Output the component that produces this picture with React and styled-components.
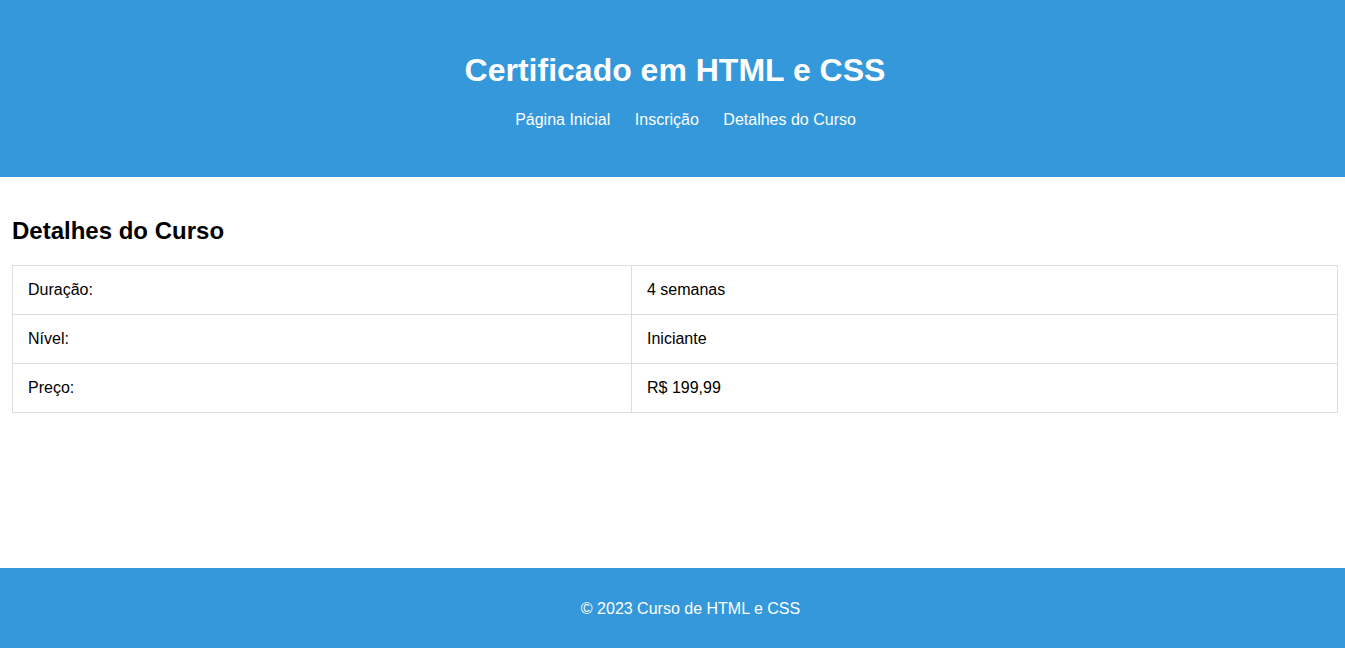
import React from 'react';
import styled, { createGlobalStyle } from 'styled-components';

const GlobalStyle = createGlobalStyle`
  * { box-sizing: border-box; }
  body {
    margin: 0;
    font-family: "Liberation Sans", Arial, sans-serif;
    color: #000;
    background: #fff;
  }
`;

const Page = styled.div`
  min-height: 100vh;
  display: flex;
  flex-direction: column;
`;

const Header = styled.header`
  background: #3498db;
  color: #fff;
  text-align: center;
  padding: 31px 0 32px;
`;

const Title = styled.h1`
  font-size: 32px;
  margin: 21.44px 0;
  padding-left: 5px;
  line-height: normal;
`;

const NavList = styled.ul`
  list-style: none;
  margin: 16px 0;
  padding: 0 0 0 26px;
  display: flex;
  justify-content: center;
  gap: 24.5px;
`;

const NavLink = styled.a`
  color: #fff;
  text-decoration: none;
  font-size: 16px;
  line-height: 18.4px;
`;

const Main = styled.main`
  flex: 1;
  padding: 20px 7px 20px 12px;
`;

const SectionTitle = styled.h2`
  font-size: 24px;
  margin: 19.92px 0;
  line-height: normal;
`;

const Table = styled.table`
  width: 100%;
  border-collapse: collapse;
  font-size: 16px;
`;

const Cell = styled.td`
  border: 1px solid #ddd;
  padding: 15px;
  line-height: 18px;
  width: ${({ $w }) => $w || 'auto'};
`;

const Footer = styled.footer`
  background: #3498db;
  color: #fff;
  text-align: center;
  padding: 16px 0 14px 36px;
`;

const FooterText = styled.p`
  margin: 16px 0;
  font-size: 16px;
  line-height: 18.4px;
`;

const links = ['Página Inicial', 'Inscrição', 'Detalhes do Curso'];

const details = [
  ['Duração:', '4 semanas'],
  ['Nível:', 'Iniciante'],
  ['Preço:', 'R$ 199,99'],
];

export default function App() {
  return (
    <Page>
      <GlobalStyle />
      <Header>
        <Title>Certificado em HTML e CSS</Title>
        <nav>
          <NavList>
            {links.map((l) => (
              <li key={l}>
                <NavLink href="#">{l}</NavLink>
              </li>
            ))}
          </NavList>
        </nav>
      </Header>
      <Main>
        <SectionTitle>Detalhes do Curso</SectionTitle>
        <Table>
          <tbody>
            {details.map(([k, v]) => (
              <tr key={k}>
                <Cell $w="619px">{k}</Cell>
                <Cell>{v}</Cell>
              </tr>
            ))}
          </tbody>
        </Table>
      </Main>
      <Footer>
        <FooterText>© 2023 Curso de HTML e CSS</FooterText>
      </Footer>
    </Page>
  );
}
